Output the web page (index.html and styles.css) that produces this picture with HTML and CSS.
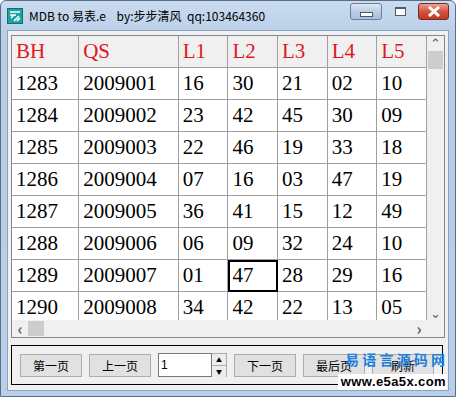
FILE: index.html
```html
<!DOCTYPE html>
<html lang="zh">
<head>
  <meta charset="UTF-8">
  <title>MDB to 易表.e</title>
  <link rel="stylesheet" href="styles.css">
</head>
<body>
  <div class="window">
    <div class="titlebar">
      <svg class="app-icon" width="16" height="16" viewBox="0 0 16 16">
        <rect x="0.5" y="0.5" width="15" height="15" fill="#1aa3a3" stroke="#0d6f73"/>
        <path d="M3 4h10M3 7h6M4 10l3-3M7 13l5-5M10 13l3-3" stroke="#fff" stroke-width="1.6" fill="none"/>
      </svg>
      <span class="title">MDB to 易表.e&nbsp;&nbsp;&nbsp;&nbsp;by:步步清风&nbsp;&nbsp;qq:103464360</span>
      <div class="caption-btns">
        <div class="cbtn min"><span class="min-bar"></span></div>
        <div class="cbtn max"><span class="max-box"></span></div>
        <div class="cbtn close">
          <svg width="14" height="11" viewBox="0 0 14 11"><path d="M2 1l10 9M12 1L2 10" stroke="#fff" stroke-width="3"/></svg>
        </div>
      </div>
    </div>
    <div class="client">
      <div class="grid">
        <div class="grid-main">
          <div class="cells">
            <table id="tbl">
              <thead>
                <tr><th>BH</th><th>QS</th><th>L1</th><th>L2</th><th>L3</th><th>L4</th><th>L5</th></tr>
              </thead>
              <tbody>
                <tr><td>1283</td><td>2009001</td><td>16</td><td>30</td><td>21</td><td>02</td><td>10</td></tr>
                <tr><td>1284</td><td>2009002</td><td>23</td><td>42</td><td>45</td><td>30</td><td>09</td></tr>
                <tr><td>1285</td><td>2009003</td><td>22</td><td>46</td><td>19</td><td>33</td><td>18</td></tr>
                <tr><td>1286</td><td>2009004</td><td>07</td><td>16</td><td>03</td><td>47</td><td>19</td></tr>
                <tr><td>1287</td><td>2009005</td><td>36</td><td>41</td><td>15</td><td>12</td><td>49</td></tr>
                <tr><td>1288</td><td>2009006</td><td>06</td><td>09</td><td>32</td><td>24</td><td>10</td></tr>
                <tr><td>1289</td><td>2009007</td><td>01</td><td class="sel">47</td><td>28</td><td>29</td><td>16</td></tr>
                <tr><td>1290</td><td>2009008</td><td>34</td><td>42</td><td>22</td><td>13</td><td>05</td></tr>
              </tbody>
            </table>
          </div>
          <div class="vscroll">
            <span class="arrow">&#8963;</span>
            <span class="vthumb"></span>
            <span class="spacer"></span>
            <span class="arrow">&#8964;</span>
          </div>
        </div>
        <div class="hscroll">
          <span class="harrow">&lsaquo;</span>
          <span class="hthumb"></span>
          <span class="spacer"></span>
          <span class="harrow">&rsaquo;</span>
          <span class="corner"></span>
        </div>
      </div>
      <div class="pager">
        <button class="btn">第一页</button>
        <button class="btn">上一页</button>
        <div class="spin">
          <div class="spin-input">1</div>
          <div class="spin-btns">
            <span class="sb">&#9650;</span>
            <span class="sb">&#9660;</span>
          </div>
        </div>
        <button class="btn">下一页</button>
        <button class="btn">最后页</button>
        <button class="btn">刷新</button>
      </div>
      <div class="watermark">
        <div class="wm-cn">易 语 言 源 码 网</div>
        <div class="wm-url">www.e5a5x.com</div>
      </div>
    </div>
  </div>
</body>
</html>
```

FILE: styles.css
```css
html, body {
  margin: 0;
  padding: 0;
  background: #fff;
}
.window {
  width: 456px;
  height: 397px;
  box-sizing: border-box;
  background: linear-gradient(#c9dbef, #b7cde8 40px, #b9cfe9);
  border: 1px solid #5b6e85;
  border-radius: 6px 6px 0 0;
  padding: 0 6px 5px 6px;
  display: flex;
  flex-direction: column;
  font-family: "Noto Sans CJK SC", "Liberation Sans", sans-serif;
  position: relative;
}
.titlebar {
  height: 29px;
  display: flex;
  align-items: center;
  flex-shrink: 0;
}
.app-icon {
  margin: 0 6px 0 0;
}
.title {
  font-size: 12px;
  color: #000;
  white-space: nowrap;
  flex: 1;
}
.caption-btns {
  display: flex;
  align-self: flex-start;
  margin-top: 2px;
  gap: 2px;
}
.cbtn {
  height: 17px;
  border: 1px solid #6d7f96;
  border-radius: 3px;
  display: flex;
  align-items: center;
  justify-content: center;
  box-sizing: border-box;
}
.min, .max {
  width: 32px;
  background: linear-gradient(#dce7f4, #bccde3 50%, #a9bfdb);
}
.max {
  border-color: transparent;
  background: transparent;
}
.close {
  width: 31px;
  background: linear-gradient(#e9a193, #d2553e 50%, #c1391f);
  border-color: #7a2a1d;
}
.min-bar {
  width: 11px;
  height: 3px;
  background: #fff;
  border: 1px solid #4a5a70;
  margin-top: 5px;
}
.max-box {
  width: 9px;
  height: 6px;
  border: 1px solid #4a5a70;
  border-top-width: 2px;
  background: #fff;
}
.client {
  flex: 1;
  background: #f0f0f0;
  border: 1px solid #8da2bd;
  padding: 4px 3px 0 3px;
  display: flex;
  flex-direction: column;
  position: relative;
}
.grid {
  width: 434px;
  height: 303px;
  border: 1px solid #828790;
  box-sizing: border-box;
  display: flex;
  flex-direction: column;
  background: #f0f0f0;
}
.grid-main {
  display: flex;
  flex: 1;
  min-height: 0;
}
.cells {
  width: 415px;
  overflow: hidden;
  background: #fff;
}
table {
  border-collapse: collapse;
  table-layout: fixed;
  font-family: "Liberation Serif", serif;
  font-size: 21px;
}
th, td {
  height: 31px;
  padding: 0 0 0 4px;
  text-align: left;
  border: 1px solid #a0a0a0;
  white-space: nowrap;
  line-height: 31px;
  box-sizing: border-box;
}
th {
  background: #f0f0f0;
  color: #e0171e;
  font-weight: normal;
  border-top: none;
}
tr > :first-child {
  border-left: none;
}
th:nth-child(1) { width: 67px; }
th:nth-child(2) { width: 100px; }
th:nth-child(n+3) { width: 50px; }
td.sel {
  outline: 2px solid #000;
  outline-offset: -2px;
}
.vscroll {
  width: 17px;
  display: flex;
  flex-direction: column;
  align-items: center;
  background: #f0f0f0;
}
.arrow {
  height: 14px;
  font-size: 13px;
  line-height: 14px;
  color: #606060;
}
.vthumb {
  width: 15px;
  height: 18px;
  background: #cdcdcd;
  margin-top: 1px;
}
.spacer {
  flex: 1;
}
.hscroll {
  height: 17px;
  display: flex;
  align-items: center;
  background: #f0f0f0;
}
.harrow {
  width: 16px;
  text-align: center;
  font-size: 16px;
  font-weight: bold;
  line-height: 17px;
  color: #606060;
}
.hthumb {
  width: 16px;
  height: 15px;
  background: #cdcdcd;
}
.corner {
  width: 17px;
}
.pager {
  margin-top: 7px;
  width: 432px;
  height: 40px;
  border: 1px solid #000;
  box-sizing: border-box;
  display: flex;
  align-items: center;
  padding: 0 0 0 8px;
  gap: 7px;
}
.btn {
  width: 62px;
  height: 23px;
  margin: 0;
  background: #e1e1e1;
  border: 1px solid #adadad;
  font-family: "Noto Sans CJK SC", sans-serif;
  font-size: 12px;
  color: #000;
  padding: 0;
}
.spin {
  display: flex;
  height: 24px;
}
.spin-input {
  width: 54px;
  box-sizing: border-box;
  background: #fff;
  border: 1px solid #7a7a7a;
  font-family: "Liberation Sans", sans-serif;
  font-size: 12px;
  line-height: 22px;
  padding-left: 2px;
}
.spin-btns {
  width: 15px;
  display: flex;
  flex-direction: column;
  border: 1px solid #acacac;
  border-left: none;
  box-sizing: border-box;
}
.sb {
  flex: 1;
  font-size: 6px;
  line-height: 11px;
  text-align: center;
  background: #ececec;
  color: #000;
}
.sb + .sb {
  border-top: 1px solid #acacac;
}
.watermark {
  position: absolute;
  right: 1px;
  bottom: -1px;
  text-align: right;
}
.wm-cn {
  font-family: "Noto Sans CJK SC", sans-serif;
  font-size: 14px;
  font-weight: bold;
  color: #1f7fd8;
  line-height: 16px;
  margin-right: 2px;
}
.wm-url {
  display: inline-block;
  font-family: "Liberation Sans", sans-serif;
  font-size: 13px;
  font-weight: bold;
  letter-spacing: 0.4px;
  color: #000;
  background: #fff;
  line-height: 16px;
  padding: 0 1px 0 3px;
}
```
